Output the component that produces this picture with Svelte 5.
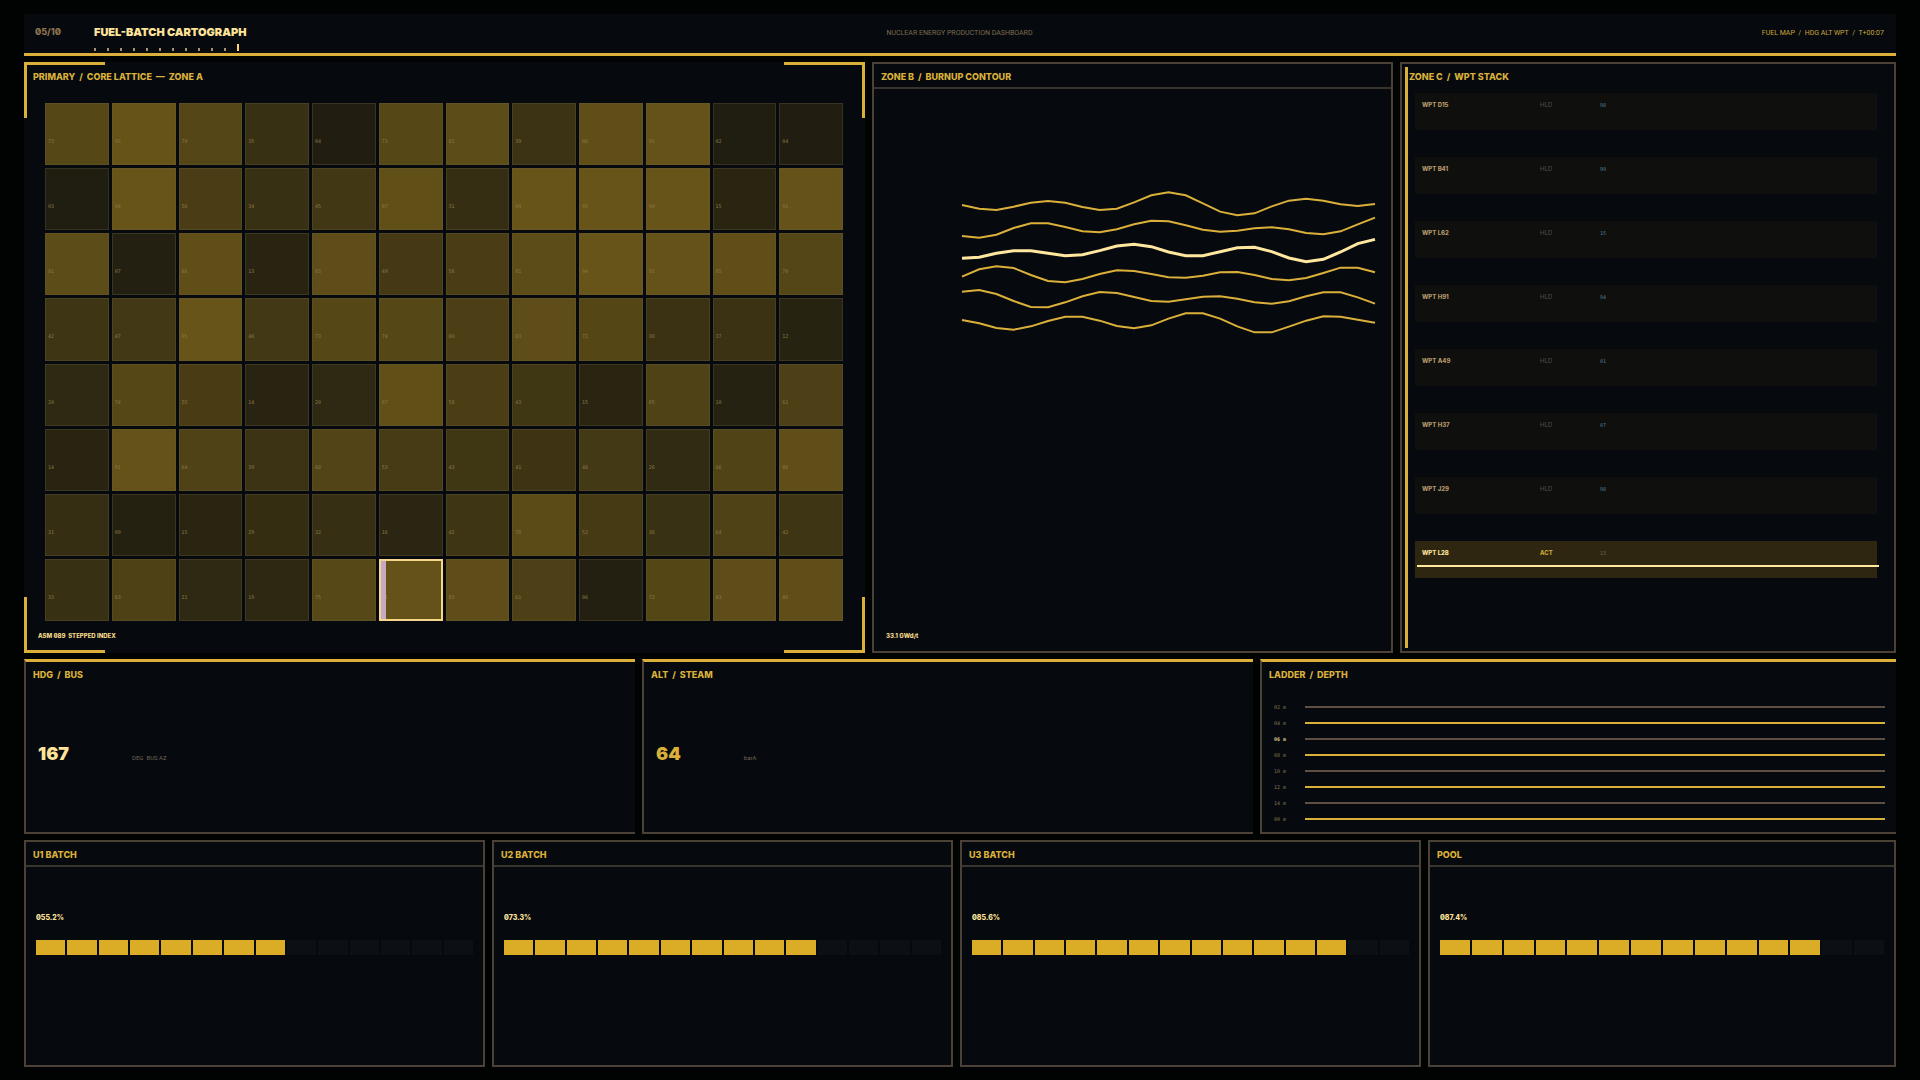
<script>
  const lattice = [
    [73, 93, 70, 35, 4, 73, 81, 39, 86, 91, 2, 4],
    [3, 94, 56, 34, 45, 87, 31, 94, 95, 94, 15, 91],
    [81, 7, 86, 13, 83, 49, 56, 81, 94, 91, 85, 70],
    [42, 47, 95, 46, 73, 74, 60, 83, 72, 38, 37, 12],
    [20, 74, 55, 14, 20, 87, 58, 43, 15, 65, 10, 61],
    [14, 91, 64, 39, 68, 53, 43, 41, 48, 26, 66, 86],
    [31, 9, 15, 29, 32, 16, 42, 78, 52, 36, 64, 42],
    [33, 63, 21, 19, 75, 91, 83, 61, 6, 72, 83, 86],
  ];
  const cells = lattice.flat();
  const selected = 89;

  const contours = [
    [616, 627, 631, 621, 609, 604, 609, 622, 631, 627, 608, 587, 578, 587, 611, 636, 647, 641, 620, 603, 597, 603, 614, 619, 613],
    [709, 714, 705, 685, 671, 671, 682, 695, 698, 689, 674, 663, 665, 677, 690, 696, 693, 686, 683, 689, 700, 704, 695, 674, 654],
    [776, 773, 761, 753, 753, 761, 768, 765, 753, 739, 734, 741, 757, 768, 768, 756, 744, 743, 756, 775, 786, 779, 757, 732, 719],
    [831, 809, 800, 805, 826, 844, 848, 838, 823, 812, 814, 823, 833, 834, 828, 818, 817, 826, 838, 842, 835, 820, 804, 804, 818],
    [876, 871, 883, 904, 922, 923, 908, 890, 877, 880, 892, 904, 906, 899, 891, 890, 897, 908, 912, 905, 890, 878, 878, 893, 912],
    [961, 971, 985, 990, 980, 964, 951, 951, 963, 979, 986, 977, 957, 941, 941, 957, 980, 998, 998, 981, 963, 950, 951, 960, 969],
  ];
  const activeContour = 2;

  const waypoints = [
    { name: "D15", mode: "HLD", value: "98" },
    { name: "B41", mode: "HLD", value: "99" },
    { name: "L62", mode: "HLD", value: "15" },
    { name: "H91", mode: "HLD", value: "94" },
    { name: "A49", mode: "HLD", value: "01" },
    { name: "H37", mode: "HLD", value: "07" },
    { name: "J29", mode: "HLD", value: "98" },
    { name: "L28", mode: "ACT", value: "13" },
  ];

  const gauges = [
    { title: "HDG", sub: "BUS", value: "167", unit: "DEG  BUS AZ", bright: true },
    { title: "ALT", sub: "STEAM", value: "64", unit: "barA", bright: false },
  ];

  const depths = ["02", "04", "06", "08", "10", "12", "14", "00"];
  const activeDepth = "06";

  const batches = [
    { title: "U1 BATCH", value: "055.2%", filled: 8 },
    { title: "U2 BATCH", value: "073.3%", filled: 10 },
    { title: "U3 BATCH", value: "085.6%", filled: 12 },
    { title: "POOL", value: "087.4%", filled: 12 },
  ];

  const pad = (n) => String(n).padStart(2, "0");
  const fill = (n) => `rgba(219, 173, 38, ${(0.115 + n * 0.0036).toFixed(3)})`;
  const points = (line) => line.map((y, x) => `${x},${y}`).join(" ");
</script>

<main class="board">
  <header class="topbar">
    <div class="brand">
      <span class="page">05/10</span>
      <div class="titles">
        <h1>FUEL-BATCH CARTOGRAPH</h1>
        <div class="ticks">
          {#each Array(12) as _, i}
            <i class:on={i === 11}></i>
          {/each}
        </div>
      </div>
    </div>
    <span class="subtitle">NUCLEAR ENERGY PRODUCTION DASHBOARD</span>
    <span class="status">FUEL MAP&nbsp; /&nbsp; HDG ALT WPT&nbsp; /&nbsp; T+00:07</span>
  </header>

  <div class="row zones">
    <section class="panel primary">
      <span class="corner tl"></span>
      <span class="corner tr"></span>
      <span class="corner bl"></span>
      <span class="corner br"></span>
      <h2>PRIMARY&nbsp; /&nbsp; CORE LATTICE&nbsp; —&nbsp; ZONE A</h2>
      <div class="lattice">
        {#each cells as cell, i}
          <div class="cell" class:selected={i === selected} style="background-color: {fill(cell)}">
            {pad(cell)}
          </div>
        {/each}
      </div>
      <p class="note">ASM 089&nbsp; STEPPED INDEX</p>
    </section>

    <section class="panel boxed">
      <h2 class="ruled">ZONE B&nbsp; /&nbsp; BURNUP CONTOUR</h2>
      <div class="plot">
        <svg viewBox="0 574 24 426" preserveAspectRatio="none">
          {#each contours as line, i}
            <polyline class:active={i === activeContour} points={points(line)} />
          {/each}
        </svg>
      </div>
      <p class="note">33.1 GWd/t</p>
    </section>

    <section class="panel boxed stack">
      <h2>ZONE C&nbsp; /&nbsp; WPT STACK</h2>
      <ul class="waypoints">
        {#each waypoints as wpt}
          <li class:active={wpt.mode === "ACT"}>
            <b>WPT {wpt.name}</b>
            <span>{wpt.mode}</span>
            <em>{wpt.value}</em>
          </li>
        {/each}
      </ul>
    </section>
  </div>

  <div class="row gauges">
    {#each gauges as gauge}
      <section class="panel open">
        <h2>{gauge.title}&nbsp; /&nbsp; {gauge.sub}</h2>
        <div class="reading" class:bright={gauge.bright}>
          <strong>{gauge.value}</strong>
          <span>{gauge.unit}</span>
        </div>
      </section>
    {/each}
    <section class="panel open">
      <h2>LADDER&nbsp; /&nbsp; DEPTH</h2>
      <ol class="ladder">
        {#each depths as depth}
          <li class:active={depth === activeDepth}>
            <span>{depth} m</span>
            <i></i>
          </li>
        {/each}
      </ol>
    </section>
  </div>

  <div class="row batches">
    {#each batches as batch}
      <section class="panel boxed">
        <h2 class="ruled">{batch.title}</h2>
        <div class="batch">
          <span>{batch.value}</span>
          <div class="segments">
            {#each Array(14) as _, i}
              <i class:on={i < batch.filled}></i>
            {/each}
          </div>
        </div>
      </section>
    {/each}
  </div>
</main>

<style>
  :global(body) {
    background: #010202;
  }
  .board {
    --gold: #dbb03a;
    --cream: #ffe39a;
    --line: #4b4136;
    --panel: #060a0e;
    box-sizing: border-box;
    min-height: 100vh;
    padding: 14px 24px 13px;
    display: grid;
    grid-template-rows: 42px 1fr minmax(175px, auto) minmax(227px, auto);
    gap: 6px;
    background: #010202;
    color: var(--gold);
    font-family: Inter, "Liberation Sans", sans-serif;
    font-variant-numeric: slashed-zero;
  }
  h1,
  h2,
  p,
  ul,
  ol {
    margin: 0;
    padding: 0;
    list-style: none;
  }

  .topbar {
    box-sizing: border-box;
    display: grid;
    grid-template-columns: 1fr auto 1fr;
    padding: 12px 12px 0 11px;
    background: var(--panel);
    border-bottom: 3px solid var(--gold);
    line-height: 12px;
  }
  .brand {
    display: grid;
    grid-template-columns: 59px 1fr;
  }
  .page {
    color: #8f7450;
    font-size: 9px;
    font-weight: 800;
  }
  h1 {
    color: var(--cream);
    font-size: 11px;
    font-weight: 900;
  }
  .ticks {
    display: flex;
    align-items: flex-end;
    gap: 11px;
    height: 7px;
    margin-top: 6px;
  }
  .ticks i {
    width: 2px;
    height: 3px;
    background: #a8946c;
  }
  .ticks .on {
    height: 7px;
    background: #ffd66b;
  }
  .subtitle,
  .status {
    color: #7d6a50;
    font-family: Roboto, sans-serif;
    font-size: 7px;
    line-height: 14px;
  }
  .status {
    color: #c9a53c;
    text-align: right;
  }

  .row {
    display: grid;
    gap: 7px;
  }
  .zones {
    grid-template-columns: 841fr 521fr 496fr;
  }
  .gauges {
    grid-template-columns: 611fr 611fr 636fr;
  }
  .batches {
    grid-template-columns: 461fr 461fr 461fr 468fr;
  }
  .panel {
    position: relative;
    box-sizing: border-box;
    min-width: 0;
    display: flex;
    flex-direction: column;
    background: var(--panel);
    border: 2px solid transparent;
  }
  .boxed {
    border-color: var(--line);
  }
  .open {
    border-width: 3px 0 2px 2px;
    border-color: var(--gold) transparent var(--line) var(--line);
  }
  h2 {
    padding: 8px 7px 5px;
    border-bottom: 2px solid transparent;
    font-size: 9px;
    font-weight: 800;
    line-height: 10px;
  }
  h2.ruled {
    border-color: #37332d;
  }
  .note {
    margin-top: auto;
    padding: 10px 12px;
    color: #f4d98a;
    font-size: 6px;
    font-weight: 800;
    line-height: 10px;
  }

  .corner {
    position: absolute;
    box-sizing: border-box;
    width: 81px;
    height: 56px;
    border: 0 solid var(--gold);
  }
  .tl {
    top: -2px;
    left: -2px;
    border-width: 3px 0 0 3px;
  }
  .tr {
    top: -2px;
    right: -2px;
    border-width: 3px 3px 0 0;
  }
  .bl {
    bottom: -2px;
    left: -2px;
    border-width: 0 0 3px 3px;
  }
  .br {
    bottom: -2px;
    right: -2px;
    border-width: 0 3px 3px 0;
  }

  .lattice {
    flex: 1;
    display: grid;
    grid-template-columns: repeat(12, 1fr);
    grid-template-rows: repeat(8, 1fr);
    gap: 3px;
    padding: 14px 20px 0 19px;
  }
  .cell {
    position: relative;
    padding: 34px 2px 0;
    border: 1px solid rgba(110, 100, 70, 0.3);
    color: #8a7846;
    font-family: "DejaVu Sans Mono", monospace;
    font-size: 5px;
    line-height: 6px;
  }
  .cell.selected {
    padding: 33px 1px 0;
    border: 2px solid #f5d68a;
  }
  .cell.selected::before {
    content: "";
    position: absolute;
    inset: 0 auto 0 0;
    width: 5px;
    background: #c4a8c4;
  }

  .plot {
    padding: 102px 16px 0 88px;
  }
  .plot svg {
    display: block;
    width: 100%;
    height: 142px;
    overflow: visible;
  }
  polyline {
    fill: none;
    stroke: var(--gold);
    stroke-width: 2px;
    vector-effect: non-scaling-stroke;
  }
  polyline.active {
    stroke: #ffe7a0;
    stroke-width: 3px;
  }

  .stack::before {
    content: "";
    position: absolute;
    inset: 3px auto 3px 3px;
    width: 3px;
    background: var(--gold);
  }
  .waypoints {
    display: grid;
    gap: 27px;
    padding: 4px 17px 0 13px;
  }
  .waypoints li {
    position: relative;
    box-sizing: border-box;
    height: 37px;
    display: grid;
    grid-template-columns: 118px 60px 1fr;
    padding: 7px;
    background: #0f0f0d;
    color: #565049;
    font-size: 6px;
    line-height: 10px;
  }
  .waypoints b {
    color: #b3966a;
    font-weight: 800;
  }
  .waypoints em {
    color: #4a7f9c;
    font-family: "DejaVu Sans Mono", monospace;
    font-size: 5px;
    font-style: normal;
  }
  .waypoints .active {
    background: #2e2610;
    color: var(--gold);
  }
  .waypoints .active span {
    font-weight: 700;
  }
  .waypoints .active b {
    color: var(--cream);
  }
  .waypoints .active em {
    color: #6d6a5c;
  }
  .waypoints .active::after {
    content: "";
    position: absolute;
    inset: 24px -2px auto 2px;
    height: 2px;
    background: #ffe7a0;
  }

  .reading {
    flex: 1;
    display: flex;
    align-items: baseline;
    gap: 63px;
    padding: 57px 12px 0;
    line-height: 20px;
  }
  .reading strong {
    font-size: 18px;
    font-weight: 900;
  }
  .reading.bright strong {
    color: var(--cream);
  }
  .reading span {
    color: #6d6254;
    font-family: Roboto, sans-serif;
    font-size: 6px;
    white-space: pre;
  }

  .ladder {
    display: grid;
    padding: 12px 11px 0 12px;
  }
  .ladder li {
    display: grid;
    grid-template-columns: 31px 1fr;
    align-items: center;
    height: 16px;
    color: #857558;
    font-family: "DejaVu Sans Mono", monospace;
    font-size: 5px;
    line-height: 6px;
  }
  .ladder .active {
    color: #d8c28a;
    font-weight: 700;
  }
  .ladder i {
    height: 2px;
    background: #5f4f42;
  }
  .ladder li:nth-child(even) i {
    background: var(--gold);
  }

  .batch {
    padding: 45px 10px 0;
    color: var(--cream);
    font-size: 7px;
    font-weight: 800;
    line-height: 12px;
  }
  .segments {
    display: grid;
    grid-template-columns: repeat(14, 1fr);
    gap: 2px;
    margin-top: 16px;
  }
  .segments i {
    height: 15px;
    background: #0c1014;
  }
  .segments .on {
    background: #dbad26;
  }
</style>
